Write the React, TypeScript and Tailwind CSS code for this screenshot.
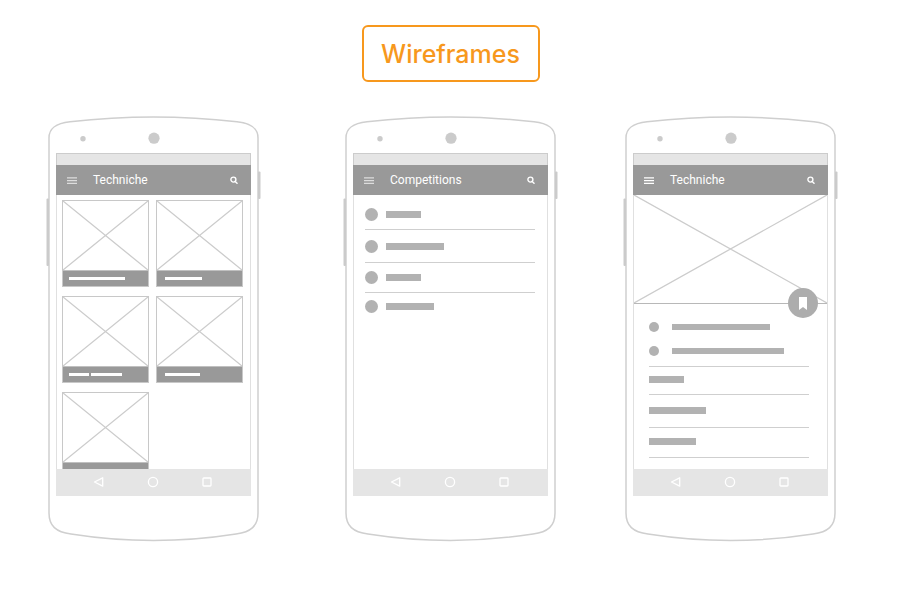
import type { ReactNode } from "react";

function PhoneOutline() {
  return (
    <svg className="absolute inset-0 h-full w-full" viewBox="0 0 215 427" fill="none" aria-hidden="true">
      <path
        d="M3 22C3 12 10 7.4 24 5.8Q107.5 -3.8 191 5.8C205 7.4 212 12 212 22V397C212 410 205 416 190 418Q107.5 431 25 418C10 416 3 410 3 397Z"
        stroke="#cfcfcf"
        strokeWidth="1.5"
      />
      <rect x="0.5" y="82.5" width="2.5" height="67.5" rx="1" fill="#cbcbcb" />
      <rect x="212" y="55.5" width="2.5" height="27.5" rx="1" fill="#cbcbcb" />
      <circle cx="37" cy="22.7" r="2.7" fill="#cbcbcb" />
      <circle cx="108" cy="22.2" r="5.6" fill="#cbcbcb" />
    </svg>
  );
}

function Crossed() {
  return (
    <svg className="block h-full w-full" viewBox="0 0 100 100" preserveAspectRatio="none" fill="none" aria-hidden="true">
      <path d="M0 0L100 100M100 0L0 100" stroke="#cccccc" strokeWidth="1.3" vectorEffect="non-scaling-stroke" />
    </svg>
  );
}

function NavBar() {
  return (
    <nav className="flex h-[27px] items-center justify-center gap-[42px] bg-[#e5e5e5] pr-px pb-0.5">
      <button type="button" aria-label="Back" className="size-3">
        <svg viewBox="0 0 12 12" fill="none" stroke="#fff" strokeWidth="1.3" strokeLinejoin="round">
          <path d="M1.5 6L9.7 1.8V10.2Z" />
        </svg>
      </button>
      <button type="button" aria-label="Home" className="size-3">
        <svg viewBox="0 0 12 12" fill="none" stroke="#fff" strokeWidth="1.3">
          <circle cx="6" cy="6" r="4.6" />
        </svg>
      </button>
      <button type="button" aria-label="Recent apps" className="size-3">
        <svg viewBox="0 0 12 12" fill="none" stroke="#fff" strokeWidth="1.3">
          <rect x="2" y="2" width="8" height="8" rx="0.8" />
        </svg>
      </button>
    </nav>
  );
}

function Phone({ title, menuClass, children }: { title: string; menuClass: string; children: ReactNode }) {
  return (
    <section className="relative h-[427px] w-[215px] px-[10px] pt-[37px]">
      <PhoneOutline />
      <div className="relative">
        <div className="h-3 border border-b-0 border-[#cccccc] bg-[#e5e5e5]" />
        <header className="flex h-[30px] items-center bg-[#999999] pr-[13px] pl-[11px]">
          <button type="button" aria-label="Menu" className={`h-2 w-[10px] ${menuClass}`}>
            <svg viewBox="0 0 10 8" fill="none" stroke="currentColor" strokeWidth="1.2">
              <path d="M0 1.8H10M0 4.7H10M0 7.4H10" />
            </svg>
          </button>
          <h2 className="ml-4 flex-1 text-[12px] leading-4 text-white">{title}</h2>
          <button type="button" aria-label="Search" className="size-2">
            <svg viewBox="0 0 8 8" fill="none" stroke="#fff" strokeWidth="1.4">
              <circle cx="3.4" cy="3.6" r="2.5" />
              <path d="M5.2 5.4L7.5 7.7" />
            </svg>
          </button>
        </header>
        <main className="h-[274px] overflow-hidden border-x border-[#e0e0e0]">{children}</main>
        <NavBar />
      </div>
    </section>
  );
}

function Card({ captionClass, bars }: { captionClass: string; bars: string[] }) {
  return (
    <li className="h-[87px] border border-[#c8c8c8]">
      <div className="h-[70px] border-b border-[#c0c0c0]">
        <Crossed />
      </div>
      <div className={`flex h-[15px] items-center gap-[2px] bg-[#999999] ${captionClass}`}>
        {bars.map((bar, i) => (
          <span key={i} className={`h-[3px] bg-white ${bar}`} />
        ))}
      </div>
    </li>
  );
}

const competitions = [
  { row: "h-[30px] border-b", bar: "w-[35px]" },
  { row: "h-[33px] border-b", bar: "w-[58px]" },
  { row: "h-[30px] border-b", bar: "w-[35px]" },
  { row: "h-[27px]", bar: "w-[48px]" },
];

const details = [
  { row: "h-[28px]", bar: "w-[35px]" },
  { row: "h-[33px]", bar: "w-[57px]" },
  { row: "h-[30px]", bar: "w-[47px]" },
];

export default function App() {
  return (
    <div className="min-h-screen bg-white pt-[25px] pb-12 font-['Roboto','Liberation_Sans',sans-serif]">
      <h1 className="mx-auto flex h-[57px] w-[178px] items-center justify-center rounded-md border-2 border-[#f7981d] font-['Inter','Liberation_Sans',sans-serif] text-[25px] leading-8 font-medium text-[#f7981d]">
        Wireframes
      </h1>
      <div className="mt-[34px] flex flex-wrap pl-[46px]">
        <div className="mr-[82px]">
          <Phone title="Techniche" menuClass="text-[#dddddd]">
            <ul className="grid grid-cols-[87px_87px] gap-x-[7px] gap-y-[9px] pt-[5px] pl-[5px]">
              <Card captionClass="pl-[6px]" bars={["w-[56px]"]} />
              <Card captionClass="pl-[8px]" bars={["w-[37px]"]} />
              <Card captionClass="pl-[6px]" bars={["w-[20px]", "w-[31px]"]} />
              <Card captionClass="pl-[8px]" bars={["w-[35px]"]} />
              <Card captionClass="pl-[6px]" bars={["w-[56px]"]} />
            </ul>
          </Phone>
        </div>
        <div className="mr-[65px]">
          <Phone title="Competitions" menuClass="text-[#dddddd]">
            <ul className="pt-[5px] pr-3 pl-[11px]">
              {competitions.map((item, i) => (
                <li key={i} className={`flex items-center gap-2 border-[#cfcfcf] ${item.row}`}>
                  <span className="size-[13px] rounded-full bg-[#b2b2b2]" />
                  <span className={`h-[7px] bg-[#b2b2b2] ${item.bar}`} />
                </li>
              ))}
            </ul>
          </Phone>
        </div>
        <Phone title="Techniche" menuClass="text-white">
          <div className="relative -mx-px h-[109px] border border-t-0 border-[#b8b8b8]">
            <Crossed />
            <button
              type="button"
              aria-label="Bookmark"
              className="absolute right-[9px] -bottom-[15px] flex size-[30px] items-center justify-center rounded-full bg-[#adadad]"
            >
              <svg className="h-[13px] w-2" viewBox="0 0 8 13" fill="#fff">
                <path d="M0 0H8V13L4 10L0 13Z" />
              </svg>
            </button>
          </div>
          <div className="pr-[18px] pl-[15px]">
            <ul className="border-b border-[#cfcfcf] pt-[11px] pb-[3px]">
              <li className="flex h-6 items-center gap-[13px]">
                <span className="size-[10px] rounded-full bg-[#b2b2b2]" />
                <span className="h-[6px] w-[98px] bg-[#b2b2b2]" />
              </li>
              <li className="flex h-6 items-center gap-[13px]">
                <span className="size-[10px] rounded-full bg-[#b2b2b2]" />
                <span className="h-[6px] w-[112px] bg-[#b2b2b2]" />
              </li>
            </ul>
            <ul>
              {details.map((item, i) => (
                <li key={i} className={`flex items-center border-b border-[#cfcfcf] pb-0.5 ${item.row}`}>
                  <span className={`h-[7px] bg-[#b2b2b2] ${item.bar}`} />
                </li>
              ))}
            </ul>
          </div>
        </Phone>
      </div>
    </div>
  );
}
